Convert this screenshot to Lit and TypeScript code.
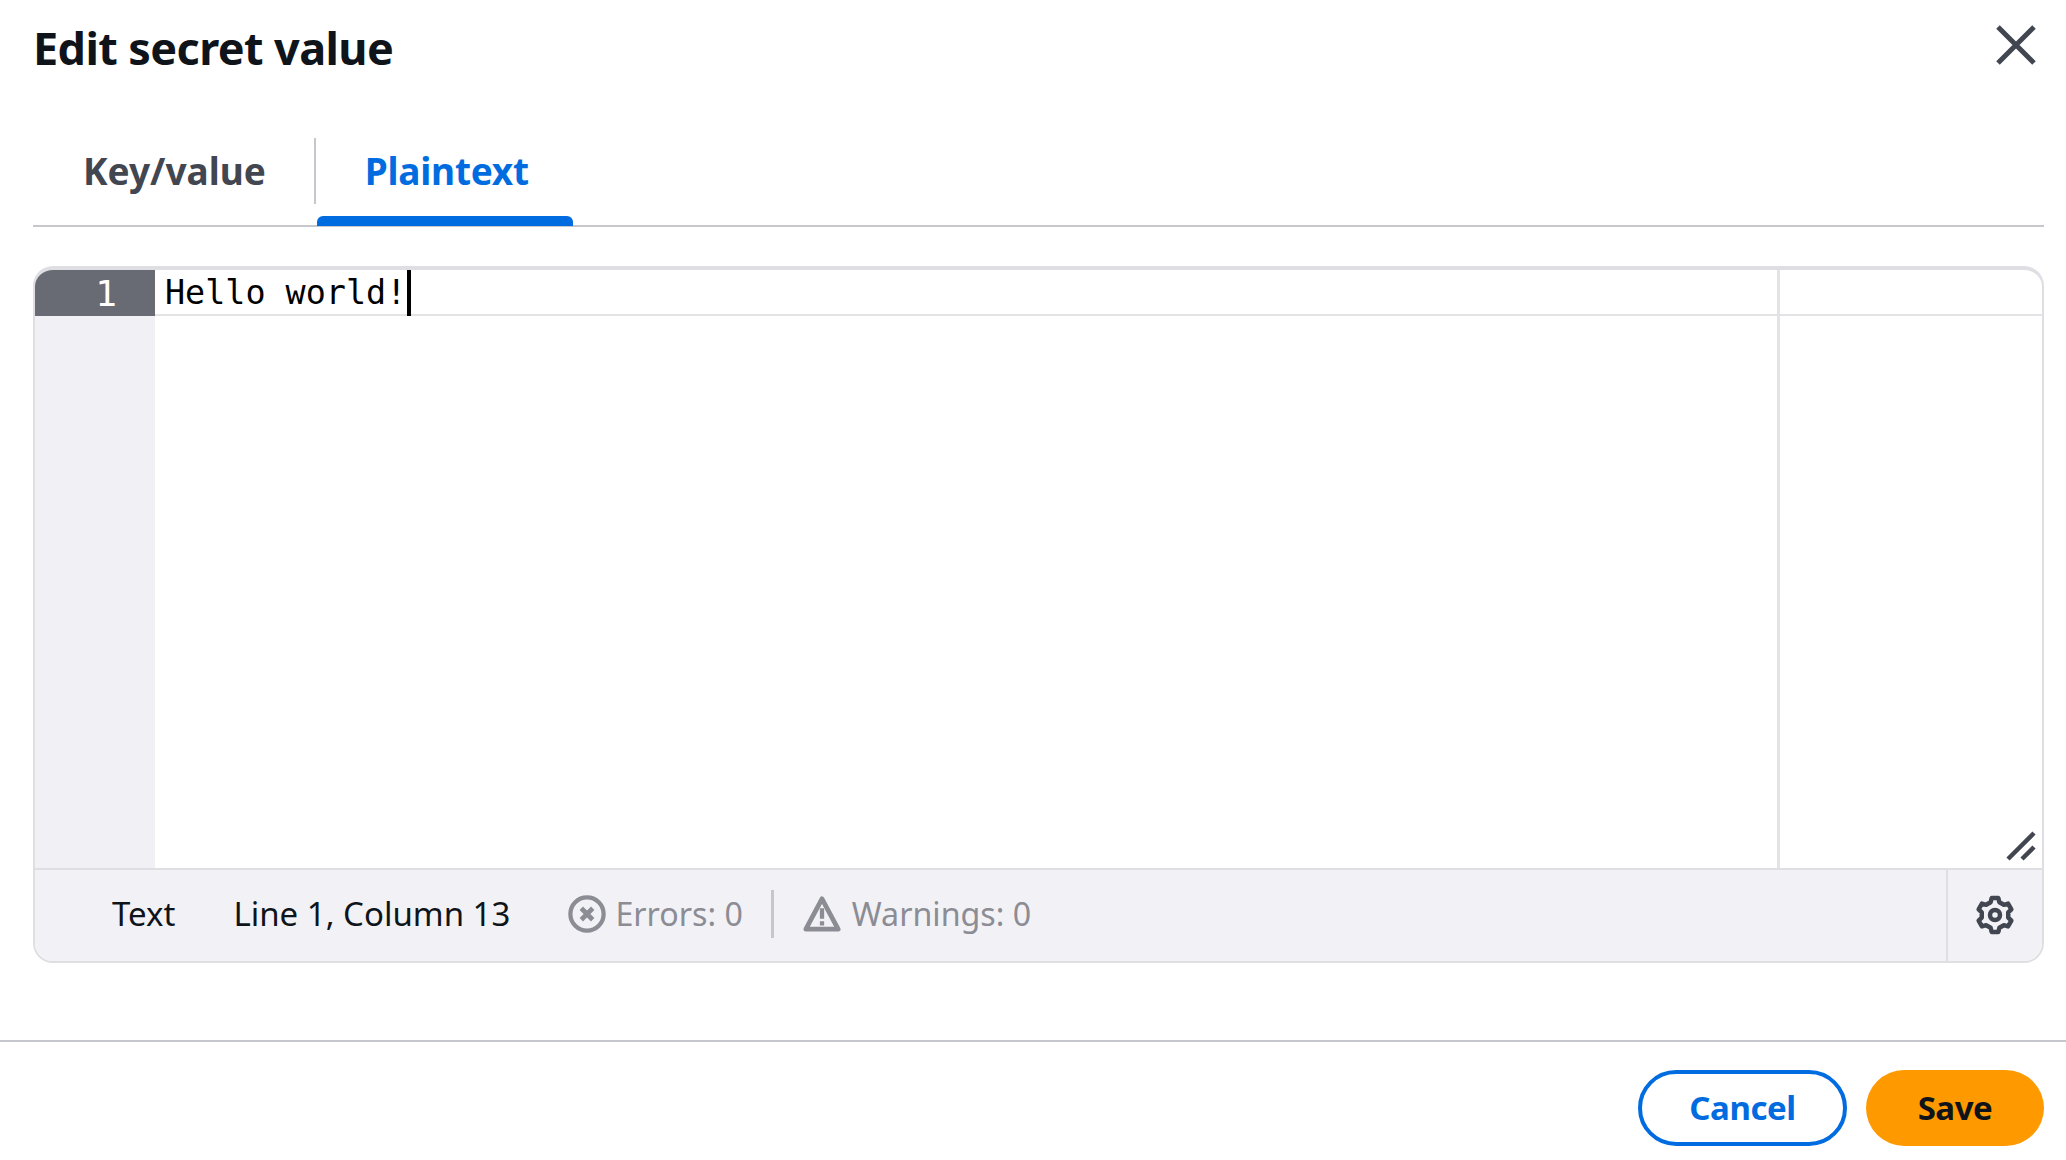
import { LitElement, html, css } from "lit";
import { customElement } from "lit/decorators.js";

const gearPath = (() => {
  const pts: string[] = [];
  for (let i = 0; i < 6; i++) {
    const c = -90 + i * 60;
    const p = (r: number, a: number) => {
      const t = ((c + a) * Math.PI) / 180;
      return `${(20 + r * Math.cos(t)).toFixed(2)} ${(20 + r * Math.sin(t)).toFixed(2)}`;
    };
    pts.push(`${i === 0 ? "M" : "L"}${p(13.5, -19)} L${p(17.3, -11)} L${p(17.3, 11)} L${p(13.5, 19)}`);
  }
  return pts.join(" ") + " Z";
})();

@customElement("app-root")
export class AppRoot extends LitElement {
  static styles = css`
    :host {
      display: flex;
      flex-direction: column;
      width: 2066px;
      height: 1160px;
      background: #fff;
      font-family: "Noto Sans", sans-serif;
      color: #0f141a;
      overflow: hidden;
    }
    .head {
      display: flex;
      justify-content: space-between;
      padding: 21px 30px 0 33px;
      height: 104px;
      box-sizing: border-box;
    }
    .title {
      margin: 0;
      font-size: 45px;
      line-height: 54px;
      font-weight: 700;
      letter-spacing: -0.6px;
    }
    .close {
      width: 40px;
      height: 40px;
      margin-top: 4px;
      color: #424650;
    }
    .tabs {
      display: flex;
      margin: 0 22px 0 33px;
      height: 123px;
      box-sizing: border-box;
      border-bottom: 2px solid #c6c6cd;
    }
    .tab {
      font-size: 37px;
      font-weight: 700;
      line-height: 50px;
      color: #424650;
      padding: 42px 50px 0 48px;
      position: relative;
    }
    .tab.first {
      border-right: 2px solid #c6c6cd;
      height: 66px;
      margin-top: 34px;
      padding: 8px 48px 0 50px;
      box-sizing: border-box;
    }
    .tab.active {
      color: #006ce0;
      margin-left: 1px;
      width: 256px;
      box-sizing: border-box;
      height: 121px;
      letter-spacing: -0.25px;
    }
    .tab.active::after {
      content: "";
      position: absolute;
      left: 0;
      right: 0;
      bottom: -1px;
      height: 10px;
      background: #006ce0;
      border-radius: 6px 6px 0 0;
    }
    .editor {
      margin: 39px 22px 0 33px;
      height: 697px;
      box-sizing: border-box;
      border: 2px solid #dedee3;
      border-top-width: 4px;
      border-radius: 20px;
      overflow: hidden;
      display: flex;
      flex-direction: column;
    }
    .main {
      flex: 1;
      display: flex;
      min-height: 0;
      position: relative;
    }
    .gutter {
      width: 120px;
      background: #f1f1f5;
    }
    .gutter-active {
      height: 46px;
      background: #686b73;
      color: #fff;
      font-family: "DejaVu Sans Mono", monospace;
      font-size: 36px;
      line-height: 47px;
      text-align: right;
      padding-right: 38px;
      box-sizing: border-box;
    }
    .code {
      width: 1622px;
      border-right: 3px solid #e3e3e6;
    }
    .rest {
      flex: 1;
    }
    .line {
      height: 44px;
      border-bottom: 2px solid #e3e3e6;
    }
    .text {
      display: flex;
      align-items: flex-start;
      padding-left: 10px;
      font-family: "DejaVu Sans Mono", monospace;
      font-size: 33.4px;
      line-height: 46px;
      color: #000;
      white-space: pre;
    }
    .cursor {
      width: 4px;
      height: 46px;
      margin-left: 1px;
      background: #000;
    }
    .grip {
      position: absolute;
      right: 6px;
      bottom: 7px;
      width: 30px;
      height: 30px;
      color: #424650;
    }
    .status {
      height: 93px;
      flex: none;
      box-sizing: border-box;
      border-top: 2px solid #dedee3;
      padding-bottom: 4px;
      background: #f2f2f6;
      display: flex;
      align-items: center;
      font-size: 33px;
    }
    .lang {
      margin-left: 77px;
    }
    .pos {
      margin-left: 58px;
    }
    .gray {
      color: #8c8c94;
      display: flex;
      align-items: center;
      gap: 9px;
      font-size: 32.2px;
    }
    .errs {
      margin-left: 58px;
    }
    .warns {
      gap: 11px;
    }
    .sep {
      width: 3px;
      height: 48px;
      background: #c6c6cd;
      margin: 0 29px 0 28px;
    }
    .spacer {
      flex: 1;
    }
    .settings {
      width: 96px;
      align-self: stretch;
      margin-bottom: -4px;
      padding-bottom: 2px;
      border-left: 2px solid #dedee3;
      box-sizing: border-box;
      display: flex;
      align-items: center;
      justify-content: center;
      color: #424650;
    }
    .foot {
      margin-top: 77px;
      border-top: 2px solid #c6c6cd;
      padding: 28px 22px 0 0;
      display: flex;
      justify-content: flex-end;
      gap: 19px;
    }
    .btn {
      height: 76px;
      border-radius: 38px;
      box-sizing: border-box;
      display: flex;
      align-items: center;
      justify-content: center;
      padding-bottom: 2px;
      font-size: 33px;
      font-weight: 700;
      letter-spacing: -0.45px;
    }
    .cancel {
      width: 209px;
      border: 4px solid #006ce0;
      color: #006ce0;
    }
    .save {
      width: 178px;
      background: #ff9900;
      color: #0f141a;
    }
    svg {
      display: block;
    }
  `;

  render() {
    return html`
      <div class="head">
        <h1 class="title">Edit secret value</h1>
        <div class="close">
          <svg viewBox="0 0 40 40" width="40" height="40">
            <path d="M2 2 L38 38 M38 2 L2 38" stroke="currentColor" stroke-width="5" fill="none" />
          </svg>
        </div>
      </div>
      <div class="tabs">
        <div class="tab first">Key/value</div>
        <div class="tab active">Plaintext</div>
      </div>
      <div class="editor">
        <div class="main">
          <div class="gutter"><div class="gutter-active">1</div></div>
          <div class="code">
            <div class="line text"><span>Hello world!</span><span class="cursor"></span></div>
          </div>
          <div class="rest"><div class="line"></div></div>
          <div class="grip">
            <svg viewBox="0 0 30 30" width="30" height="30">
              <path d="M2 28 L28 2 M16 28 L28 16" stroke="currentColor" stroke-width="4.5" fill="none" />
            </svg>
          </div>
        </div>
        <div class="status">
          <span class="lang">Text</span>
          <span class="pos">Line 1, Column 13</span>
          <span class="gray errs">
            <svg viewBox="0 0 40 40" width="38" height="38">
              <circle cx="20" cy="20" r="17.5" stroke="currentColor" stroke-width="4.5" fill="none" />
              <path d="M14 14 L26 26 M26 14 L14 26" stroke="currentColor" stroke-width="5" fill="none" />
            </svg>
            Errors: 0
          </span>
          <span class="sep"></span>
          <span class="gray warns">
            <svg viewBox="0 0 40 40" width="38" height="38">
              <path d="M20 4 L37 36 L3 36 Z" stroke="currentColor" stroke-width="5" stroke-linejoin="round" fill="none" />
              <path d="M20 14 V25 M20 27.5 V32" stroke="currentColor" stroke-width="4.5" fill="none" />
            </svg>
            Warnings: 0
          </span>
          <span class="spacer"></span>
          <div class="settings">
            <svg viewBox="0 0 40 40" width="40" height="40">
              <path d="${gearPath}" stroke="currentColor" stroke-width="4.5" stroke-linejoin="round" fill="none" />
              <circle cx="20" cy="20" r="5" stroke="currentColor" stroke-width="4.5" fill="none" />
            </svg>
          </div>
        </div>
      </div>
      <div class="foot">
        <div class="btn cancel">Cancel</div>
        <div class="btn save">Save</div>
      </div>
    `;
  }
}
